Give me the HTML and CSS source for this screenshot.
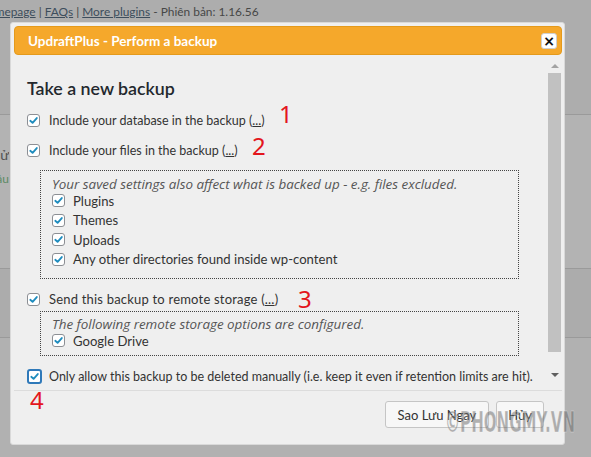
FILE: index.html
```html
<!DOCTYPE html>
<html lang="vi">
<head>
<meta charset="utf-8">
<title>UpdraftPlus - Perform a backup</title>
<link rel="stylesheet" href="styles.css">
</head>
<body>
<div class="page">
  <div class="band band-top">
    <div class="top-links"><a href="#">Homepage</a> | <a href="#">FAQs</a> | <a href="#">More plugins</a> - Phiên bản: 1.16.56</div>
  </div>
  <div class="band band-mid">
    <div class="bg-label"><span>Lịch sử</span></div>
    <div class="bg-label green"><span>Sao lưu đầu</span></div>
  </div>
  <div class="band band-low"></div>
  <div class="band band-end"></div>
</div>

<div class="dialog">
  <div class="titlebar">
    <span class="title">UpdraftPlus - Perform a backup</span>
    <span class="close">×</span>
  </div>
  <div class="dbody">
    <div class="content">
      <h2 class="heading">Take a new backup</h2>
      <div class="row"><span class="cb"><svg viewBox="0 0 12 12"><path d="M2.5 6.3 L5 8.6 L9.6 3.3"/></svg></span>Include your database in the backup&nbsp;(<u>...</u>)</div>
      <div class="row"><span class="cb"><svg viewBox="0 0 12 12"><path d="M2.5 6.3 L5 8.6 L9.6 3.3"/></svg></span>Include your files in the backup&nbsp;(<u>...</u>)</div>
      <div class="box box-files">
        <div class="note">Your saved settings also affect what is backed up - e.g. files excluded.</div>
        <div class="row sub"><span class="cb"><svg viewBox="0 0 12 12"><path d="M2.5 6.3 L5 8.6 L9.6 3.3"/></svg></span>Plugins</div>
        <div class="row sub"><span class="cb"><svg viewBox="0 0 12 12"><path d="M2.5 6.3 L5 8.6 L9.6 3.3"/></svg></span>Themes</div>
        <div class="row sub"><span class="cb"><svg viewBox="0 0 12 12"><path d="M2.5 6.3 L5 8.6 L9.6 3.3"/></svg></span>Uploads</div>
        <div class="row sub"><span class="cb"><svg viewBox="0 0 12 12"><path d="M2.5 6.3 L5 8.6 L9.6 3.3"/></svg></span>Any other directories found inside wp-content</div>
      </div>
      <div class="row row-send"><span class="cb"><svg viewBox="0 0 12 12"><path d="M2.5 6.3 L5 8.6 L9.6 3.3"/></svg></span>Send this backup to remote storage&nbsp;(<u>...</u>)</div>
      <div class="box box-remote">
        <div class="note">The following remote storage options are configured.</div>
        <div class="row sub"><span class="cb"><svg viewBox="0 0 12 12"><path d="M2.5 6.3 L5 8.6 L9.6 3.3"/></svg></span>Google Drive</div>
      </div>
      <div class="row row-manual"><span class="cb focus"><svg viewBox="0 0 12 12"><path d="M2.5 6.3 L5 8.6 L9.6 3.3"/></svg></span>Only allow this backup to be deleted manually (i.e. keep it even if retention limits are hit).</div>
    </div>
    <div class="scrollbar">
      <div class="sb-btn"><span class="tri up"></span></div>
      <div class="sb-thumb"></div>
      <div class="sb-track"></div>
      <div class="sb-btn"><span class="tri down"></span></div>
    </div>
  </div>
  <div class="buttonpane">
    <button class="btn btn-save">Sao Lưu Ngay</button>
    <button class="btn btn-cancel">Hủy</button>
  </div>
  <span class="mark m1">1</span>
  <span class="mark m2">2</span>
  <span class="mark m3">3</span>
  <span class="mark m4">4</span>
</div>

<div class="watermark">©PHONGMY.VN</div>
</body>
</html>
```

FILE: styles.css
```css
* { box-sizing: border-box; }
html, body { margin: 0; padding: 0; }
body {
  width: 591px;
  height: 457px;
  overflow: hidden;
  position: relative;
  background: #aaaaaa;
  font-family: Lato, "Noto Sans", sans-serif;
}

/* page behind the modal */
.band { border-bottom: 1px solid #9a9a9a; }
.band-top { height: 115px; background: #adadad; }
.band-mid { height: 154px; background: #b3b3b3; padding-top: 31px; }
.band-low { height: 69px; background: #acacac; }
.band-end { height: 130px; background: #b1b1b1; border-bottom: none; }

.top-links {
  font-size: 11.9px;
  line-height: 18px;
  padding-top: 3px;
  color: #474747;
  white-space: nowrap;
  text-indent: -21px;
}
.top-links a { color: #3d4d5c; text-decoration: underline; }

.bg-label {
  width: 9px;
  height: 25px;
  overflow: hidden;
  display: flex;
  justify-content: flex-end;
  white-space: nowrap;
  font-size: 14px;
  color: #505050;
}
.bg-label.green { color: #5b8a64; font-size: 12px; }

/* modal */
.dialog {
  position: absolute;
  left: 10px;
  top: 22px;
  width: 555px;
  height: 423px;
  background: #efefef;
  border: 1px solid #d9d9d9;
  border-radius: 3px;
  padding: 3px 2px 0 3px;
  display: flex;
  flex-direction: column;
}

.titlebar {
  height: 29px;
  flex: none;
  background: #f5a82b;
  border: 1px solid #e49a1c;
  border-radius: 4px;
  display: flex;
  align-items: center;
  justify-content: space-between;
  padding: 0 4px 0 13px;
}
.title {
  color: #ffffff;
  font-weight: bold;
  font-size: 13.5px;
}
.close {
  width: 16px;
  height: 16px;
  background: #ffffff;
  border: 1px solid #d0d0d0;
  border-radius: 3px;
  display: flex;
  align-items: center;
  justify-content: center;
  font-family: "DejaVu Sans", sans-serif;
  font-weight: bold;
  font-size: 14px;
  line-height: 1;
  color: #111;
}

.dbody {
  flex: 1;
  min-height: 0;
  margin-top: 3px;
  display: flex;
}
.content {
  flex: 1;
  overflow: hidden;
  padding: 18px 0 0 13px;
  color: #333;
}
.heading {
  margin: 0 0 10px 0;
  font-size: 17.8px;
  line-height: 24px;
  font-weight: 600;
  color: #23282d;
}

.row {
  display: flex;
  align-items: center;
  height: 20px;
  font-size: 12.5px;
  white-space: nowrap;
  margin-bottom: 10px;
}
.row u { text-decoration: underline; }
.cb {
  width: 13px;
  height: 13px;
  flex: none;
  border: 1px solid #8c8f94;
  border-radius: 3px;
  background: #ffffff;
  display: inline-flex;
  align-items: center;
  justify-content: center;
  margin-right: 9px;
}
.cb svg { width: 11px; height: 11px; }
.cb path {
  fill: none;
  stroke: #1e8cbe;
  stroke-width: 2;
  stroke-linecap: round;
  stroke-linejoin: round;
}
.cb.focus {
  width: 15px;
  height: 15px;
  border: 2px solid #2f79b9;
  border-radius: 3px;
  margin-right: 7px;
}

.box {
  margin-left: 13px;
  width: 479px;
  border: 1px dotted #444;
}
.box-files { margin-top: 1px; padding: 6px 0 9px 11px; }
.box-remote { margin-top: -8px; padding: 5px 0 4px 11px; }
.note {
  font-family: "Open Sans", Lato, sans-serif;
  font-style: italic;
  font-size: 13.4px;
  line-height: 14px;
  color: #555;
}
.row.sub { height: 19.5px; margin-bottom: 0; color: #333; font-size: 13.1px; }
.row.sub .cb { margin-right: 8px; }
.row-send { margin-top: 10px; font-size: 13px; letter-spacing: 0.2px; }
.row-manual { margin-top: 11px; }

.scrollbar {
  width: 15px;
  flex: none;
  display: flex;
  flex-direction: column;
  padding-bottom: 8px;
}
.sb-btn {
  height: 15px;
  display: flex;
  align-items: center;
  justify-content: center;
}
.tri { width: 0; height: 0; border-left: 4px solid transparent; border-right: 4px solid transparent; }
.tri.up { border-bottom: 4px solid #a3a3a3; }
.tri.down { border-top: 4px solid #5f5f5f; }
.sb-thumb { height: 279px; margin: 0 1px; background: #c1c1c1; }
.sb-track { flex: 1; }

.buttonpane {
  height: 54px;
  flex: none;
  border-top: 1px solid #dcdcdc;
  display: flex;
  justify-content: flex-end;
  align-items: flex-start;
  gap: 7px;
  padding: 10px 18px 0 0;
}
.btn {
  height: 27px;
  padding: 0 12px;
  background: #f7f7f7;
  border: 1px solid #c5c5c5;
  border-radius: 3px;
  font-family: Lato, "Noto Sans", sans-serif;
  font-size: 13px;
  color: #333;
}
.btn-cancel { padding: 0 11px; }

.mark {
  position: absolute;
  font-family: "Noto Sans", sans-serif;
  font-size: 24px;
  line-height: 24px;
  color: #e3161d;
}
.m1 { left: 268px; top: 79px; }
.m2 { left: 241px; top: 111px; }
.m3 { left: 287px; top: 264px; }
.m4 { left: 19px; top: 365px; }

.watermark {
  position: absolute;
  left: 445px;
  top: 405px;
  font-family: "DejaVu Sans", sans-serif;
  font-weight: bold;
  font-size: 29px;
  line-height: 34px;
  color: rgba(105, 105, 105, 0.5);
  transform: scaleX(0.52);
  transform-origin: left top;
  white-space: nowrap;
  -webkit-text-stroke: 0.6px rgba(255, 255, 255, 0.5);
}
```
